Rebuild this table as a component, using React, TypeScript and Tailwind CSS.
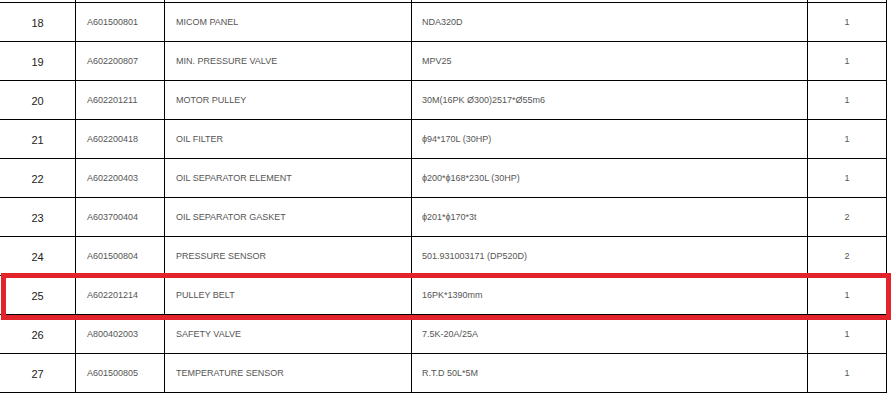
const PARTS = [
  { no: 18, code: "A601500801", name: "MICOM PANEL", spec: "NDA320D", qty: 1 },
  { no: 19, code: "A602200807", name: "MIN. PRESSURE VALVE", spec: "MPV25", qty: 1 },
  { no: 20, code: "A602201211", name: "MOTOR PULLEY", spec: "30M(16PK Ø300)2517*Ø55m6", qty: 1 },
  { no: 21, code: "A602200418", name: "OIL FILTER", spec: "ϕ94*170L (30HP)", qty: 1 },
  { no: 22, code: "A602200403", name: "OIL SEPARATOR ELEMENT", spec: "ϕ200*ϕ168*230L (30HP)", qty: 1 },
  { no: 23, code: "A603700404", name: "OIL SEPARATOR GASKET", spec: "ϕ201*ϕ170*3t", qty: 2 },
  { no: 24, code: "A601500804", name: "PRESSURE SENSOR", spec: "501.931003171 (DP520D)", qty: 2 },
  { no: 25, code: "A602201214", name: "PULLEY BELT", spec: "16PK*1390mm", qty: 1 },
  { no: 26, code: "A800402003", name: "SAFETY VALVE", spec: "7.5K-20A/25A", qty: 1 },
  { no: 27, code: "A601500805", name: "TEMPERATURE SENSOR", spec: "R.T.D 50L*5M", qty: 1 },
];

const GRID = "grid w-[887px] grid-cols-[75px_89px_247px_396px_80px]";

export default function App() {
  return (
    <div className="relative w-[893px] h-[401px] bg-white overflow-hidden" style={{ fontFamily: '"Liberation Sans", Arial, sans-serif' }}>
      {/* sliver of the previous row */}
      <div className={`${GRID} h-[2px]`}>
        <div />
        <div className="border-l border-black" />
        <div className="border-l border-black" />
        <div className="border-l border-black" />
        <div className="border-l border-r border-black" />
      </div>

      {PARTS.map((p, i) => (
        <div
          key={p.no}
          className={`${GRID} border-t border-black ${i === PARTS.length - 1 ? "h-[40px] border-b" : "h-[39px]"}`}
        >
          <div className="flex items-center justify-center pt-[2px] text-[11px] text-[#222]">{p.no}</div>
          <div className="flex items-center pl-[11px] pt-[2px] border-l border-black text-[9px] text-[#555]">{p.code}</div>
          <div className="flex items-center pl-[11px] pt-[2px] border-l border-black text-[9px] text-[#555]">{p.name}</div>
          <div className="flex items-center pl-[10px] pt-[2px] border-l border-black text-[9px] text-[#555]">{p.spec}</div>
          <div className="flex items-center justify-center pt-[2px] border-l border-r border-black text-[9px] text-[#555]">{p.qty}</div>
        </div>
      ))}

      {/* highlight on row 25 */}
      <div className="absolute left-[1px] top-[273px] w-[890px] h-[47px] border-[5px] border-[#e3242d] pointer-events-none" />
    </div>
  );
}
